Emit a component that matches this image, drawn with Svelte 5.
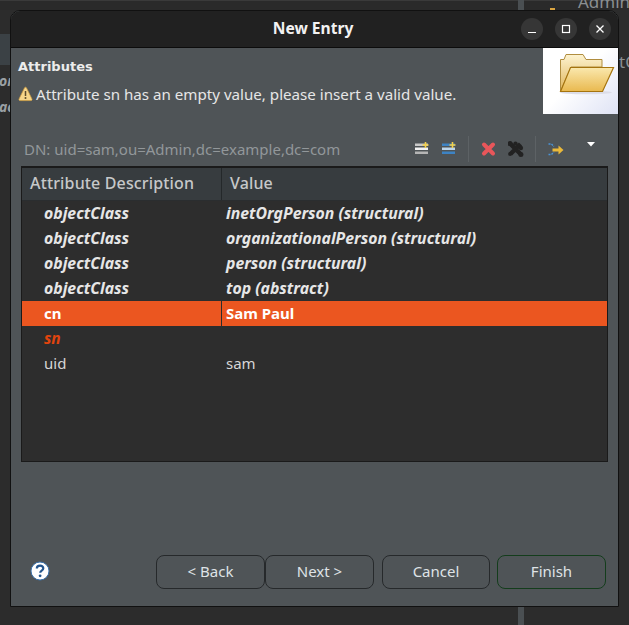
<script lang="ts">
  const rows = [
    { attr: "objectClass", value: "inetOrgPerson (structural)", kind: "must" },
    { attr: "objectClass", value: "organizationalPerson (structural)", kind: "must" },
    { attr: "objectClass", value: "person (structural)", kind: "must" },
    { attr: "objectClass", value: "top (abstract)", kind: "must" },
    { attr: "cn", value: "Sam Paul", kind: "selected" },
    { attr: "sn", value: "", kind: "empty" },
    { attr: "uid", value: "sam", kind: "plain" },
  ];
</script>

<main class="desktop">
  <!-- window behind the dialog -->
  <div class="bg-top"></div>
  <div class="bg-bar"></div>
  <div class="bg-band"></div>
  <i class="bg-icon"></i>
  <span class="bg-text bg-on">on</span>
  <span class="bg-text bg-ac">ac</span>
  <span class="bg-admin">Admin</span>
  <span class="bg-tc">tC</span>

  <section class="dialog">
    <header class="titlebar">
      <h1>New Entry</h1>
      <div class="winbtns">
        <button class="winbtn" aria-label="minimize">
          <svg width="10" height="10" viewBox="0 0 10 10"><path d="M1 8.500h8" stroke="#fff" stroke-width="1.200" /></svg>
        </button>
        <button class="winbtn" aria-label="maximize">
          <svg width="10" height="10" viewBox="0 0 10 10"><rect x="1.500" y="1.500" width="7" height="7" fill="none" stroke="#fff" stroke-width="1.200" /></svg>
        </button>
        <button class="winbtn" aria-label="close">
          <svg width="10" height="10" viewBox="0 0 10 10"><path d="M1.500 1.500l7 7M8.500 1.500l-7 7" stroke="#fff" stroke-width="1.300" /></svg>
        </button>
      </div>
    </header>

    <div class="head">
      <div class="head-text">
        <h2>Attributes</h2>
        <p class="message">
          <svg width="15" height="16" viewBox="0 0 15 16">
            <path d="M7.500 1.200c.5 0 .8.300 1 .7l5.400 11c.4.800-.1 1.700-1 1.700H2.100c-.9 0-1.400-.9-1-1.700L6.500 1.900c.2-.4.500-.7 1-.7z" fill="#f6d58a" stroke="#d9a441" stroke-width=".7" />
            <path d="M7.500 5v5" stroke="#5b4a2a" stroke-width="1.500" />
            <circle cx="7.500" cy="12" r="1" fill="#5b4a2a" />
          </svg>
          Attribute sn has an empty value, please insert a valid value.
        </p>
      </div>
      <div class="banner">
        <svg width="56" height="42" viewBox="0 0 56 42">
          <defs>
            <linearGradient id="back" x1="0" y1="0" x2="0" y2="1">
              <stop offset="0" stop-color="#fdf3d0" />
              <stop offset="1" stop-color="#e0b55a" />
            </linearGradient>
            <linearGradient id="front" x1="0" y1="0" x2="0" y2="1">
              <stop offset="0" stop-color="#fae8ae" />
              <stop offset="1" stop-color="#e9b94f" />
            </linearGradient>
          </defs>
          <ellipse cx="27" cy="39.500" rx="26" ry="1.800" fill="#dcdde8" />
          <path d="M1.500 38.500V6.500h3.500l2-5h17l3 5h16V14H12z" fill="url(#back)" stroke="#b08d3f" stroke-width="1" />
          <path d="M1.500 38.500 11.500 14.500H54.500L43.500 38.500z" fill="url(#front)" stroke="#a5740f" stroke-width="1.200" />
        </svg>
      </div>
    </div>

    <div class="dnbar">
      <span class="dn">DN: uid=sam,ou=Admin,dc=example,dc=com</span>
      <div class="tools">
        <svg class="tool" width="16" height="16" viewBox="0 0 16 16">
          <rect x="1.500" y="2.500" width="13" height="2.500" fill="#c9c9c9" />
          <rect x="1.500" y="6.500" width="13" height="2.500" fill="#f2f2f2" />
          <rect x="1.500" y="10.500" width="13" height="2.500" fill="#b5b5b5" />
          <path d="M12 1v6M9 4h6" stroke="#f3d04a" stroke-width="1.600" />
        </svg>
        <svg class="tool" width="16" height="16" viewBox="0 0 16 16">
          <rect x="1.500" y="2.500" width="13" height="2.500" fill="#3d83c4" />
          <rect x="1.500" y="6.500" width="13" height="2.500" fill="#bcd5ea" />
          <rect x="1.500" y="10.500" width="13" height="2.500" fill="#3d83c4" />
          <path d="M12 1v6M9 4h6" stroke="#f3d04a" stroke-width="1.600" />
        </svg>
        <i class="sep"></i>
        <svg class="tool" width="16" height="16" viewBox="0 0 16 16">
          <path d="M3.500 3.500l9 9M12.500 3.500l-9 9" stroke="#e8565a" stroke-width="4" stroke-linecap="round" />
        </svg>
        <svg class="tool" width="16" height="16" viewBox="0 0 16 16">
          <path d="M2.500 2.500l11 11M13 3l-10 10" stroke="#222" stroke-width="4.400" />
          <circle cx="2.600" cy="2.600" r="2.500" fill="#222" />
          <circle cx="13.400" cy="13.400" r="2.500" fill="#222" />
          <circle cx="8" cy="2.600" r="2.200" fill="#222" />
          <circle cx="13.400" cy="7" r="2.200" fill="#222" />
          <circle cx="2.600" cy="13" r="2" fill="#222" />
        </svg>
        <i class="sep"></i>
        <svg class="tool" width="16" height="16" viewBox="0 0 16 16">
          <path d="M1 3h3l2.500 2.500M1 13.500h3l2.500-2.500" fill="none" stroke="#4a93d6" stroke-width="1.400" stroke-dasharray="2 1" />
          <path d="M5 9h8" stroke="#eab93a" stroke-width="3" />
          <path d="M11 4.500l5 4.500-5 4.500z" fill="#eab93a" />
        </svg>
        <svg class="menu" width="8" height="5" viewBox="0 0 8 5"><path d="M0 0h8L4 4.500z" fill="#fff" /></svg>
      </div>
    </div>

    <div class="table">
      <div class="thead">
        <div class="c1">Attribute Description</div>
        <div class="c2">Value</div>
      </div>
      {#each rows as row}
        <div class="row {row.kind}">
          <div class="c1">{row.attr}</div>
          <div class="c2">{row.value}</div>
        </div>
      {/each}
    </div>

    <footer class="actions">
      <svg class="help" width="20" height="20" viewBox="0 0 20 20">
        <circle cx="10" cy="10" r="9" fill="#fff" stroke="#3a72ad" stroke-width="1" />
        <path d="M6.800 7.600c0-2 1.500-3 3.300-3s3.200 1 3.200 2.700c0 2.400-3.100 2.300-3.100 4.500" fill="none" stroke="#23558e" stroke-width="2.200" />
        <circle cx="10.100" cy="14.800" r="1.400" fill="#23558e" />
      </svg>
      <div class="buttons">
        <button class="btn">&lt; Back</button>
        <button class="btn">Next &gt;</button>
        <button class="btn cancel">Cancel</button>
        <button class="btn finish">Finish</button>
      </div>
    </footer>
  </section>
</main>

<style>
  :global(body) {
    margin: 0;
    background: #2c2c2c;
  }

  .desktop {
    position: relative;
    width: 629px;
    height: 625px;
    overflow: hidden;
    background: #2c2c2c;
    font-family: "Noto Sans", sans-serif;
    color: #e6e6e6;
  }

  .bg-top {
    position: absolute;
    inset: 0 0 auto 0;
    height: 10px;
    background: #2a2a2a;
    border-top: 1px solid #3a3a3a;
    box-sizing: border-box;
  }

  .bg-bar {
    position: absolute;
    left: 518px;
    top: 0;
    bottom: 0;
    width: 6px;
    background: #4a4f52;
  }

  .bg-band {
    position: absolute;
    left: 0;
    top: 34px;
    width: 11px;
    height: 31px;
    background: #3b4145;
  }

  .bg-icon {
    position: absolute;
    left: 550px;
    top: 8px;
    width: 5px;
    height: 3px;
    background: #d9a441;
  }

  .bg-text {
    position: absolute;
    left: -1px;
    width: 11px;
    overflow: hidden;
    font: italic bold 14px "Noto Sans", sans-serif;
    color: #9aa0a4;
  }
  .bg-on { top: 71px; }
  .bg-ac { top: 97px; }

  .bg-admin,
  .bg-tc {
    position: absolute;
    font-size: 17px;
    color: #8a8f92;
    white-space: nowrap;
  }
  .bg-admin { left: 578px; top: -10px; }
  .bg-tc { left: 619px; top: 50px; }

  .dialog {
    position: absolute;
    left: 10px;
    top: 10px;
    width: 609px;
    height: 597px;
    box-sizing: border-box;
    display: flex;
    flex-direction: column;
    background: #4f5457;
    border: 1px solid #111;
    border-radius: 10px 10px 0 0;
    overflow: hidden;
  }

  .titlebar {
    position: relative;
    height: 37px;
    flex: none;
    box-sizing: border-box;
    background: #212121;
    border-bottom: 1px solid #0c0c0c;
    display: flex;
    align-items: center;
    justify-content: center;
    padding-right: 3px;
  }

  h1 {
    margin: 0 0 2px;
    font-size: 15.6px;
    font-weight: 700;
    color: #f2f2f2;
  }

  .winbtns {
    position: absolute;
    right: 7px;
    top: 7px;
    display: flex;
    gap: 12px;
  }

  .winbtn {
    width: 22px;
    height: 22px;
    padding: 0;
    border: 0;
    border-radius: 50%;
    background: #363636;
    display: flex;
    align-items: center;
    justify-content: center;
  }

  .head {
    height: 66px;
    flex: none;
    display: flex;
    justify-content: space-between;
  }

  .head-text {
    padding: 10px 0 0 7px;
  }

  h2 {
    margin: 0;
    font-family: "DejaVu Sans", sans-serif;
    font-size: 13px;
    line-height: 18px;
    font-weight: 700;
    color: #ececec;
  }

  .message {
    margin: 7px 0 0;
    display: flex;
    align-items: center;
    gap: 3px;
    font-size: 15.15px;
    line-height: 22px;
    color: #e6e6e6;
  }

  .banner {
    width: 75px;
    box-sizing: border-box;
    padding: 5px 0 0 16px;
    background: linear-gradient(135deg, #fff 45%, #dfe3f5);
  }

  .banner svg {
    display: block;
  }

  .dnbar {
    height: 52px;
    flex: none;
    box-sizing: border-box;
    padding: 22px 23px 0 13px;
    display: flex;
    justify-content: space-between;
    align-items: flex-start;
  }

  .dn {
    font-size: 15px;
    line-height: 26px;
    color: #92979a;
  }

  .tools {
    display: flex;
    align-items: center;
    height: 26px;
  }

  .tool {
    padding: 0 5.500px;
    flex: none;
  }

  .sep {
    width: 1px;
    height: 26px;
    margin: 0 6px;
    background: #5d6265;
  }

  .menu {
    align-self: flex-start;
    margin: 6px 0 0 18px;
  }

  .table {
    margin: 0 10px;
    height: 296px;
    flex: none;
    box-sizing: border-box;
    border: 1px solid #1a1a1a;
    border-top-width: 2px;
    background: #2d2d2d;
    font-size: 15px;
  }

  .thead,
  .row {
    display: grid;
    grid-template-columns: 200px 1fr;
  }

  .thead {
    height: 33px;
    box-sizing: border-box;
    background: #373c3f;
    border-bottom: 1px solid #2a2d2f;
    color: #c6c8c9;
    font-size: 16px;
    line-height: 30px;
    font-weight: 500;
    letter-spacing: 0.15px;
  }

  .thead .c1 {
    padding-left: 8px;
    border-right: 1px solid #24282a;
  }

  .thead .c2 {
    padding-left: 8px;
  }

  .row {
    height: 25px;
    line-height: 24px;
    color: #d6d6d6;
  }

  .row .c1 {
    padding-left: 22px;
  }

  .row .c2 {
    padding-left: 4px;
  }

  .must {
    font-size: 15.8px;
    font-style: italic;
    font-weight: 700;
    color: #e6e6e6;
  }

  .selected {
    background: #eb5620;
    font-weight: 700;
    color: #fff;
  }

  .selected .c1 {
    border-right: 1px solid #2d2d2d;
  }

  .empty {
    font-size: 15.500px;
    font-style: italic;
    font-weight: 700;
    color: #e0440e;
  }

  .actions {
    flex: 1;
    display: flex;
    align-items: flex-end;
    justify-content: space-between;
    padding: 0 12px 17px 19px;
  }

  .help {
    margin-bottom: 8px;
  }

  .buttons {
    display: flex;
  }

  .btn {
    width: 109px;
    height: 34px;
    box-sizing: border-box;
    border: 1px solid #26292b;
    border-radius: 8px;
    background: transparent;
    color: #dfe3e6;
    font-family: inherit;
    font-size: 15px;
    padding: 0 0 2px;
  }

  .cancel {
    width: 108px;
    margin: 0 7px 0 8px;
  }

  .finish {
    border-color: #143d1c;
  }
</style>
